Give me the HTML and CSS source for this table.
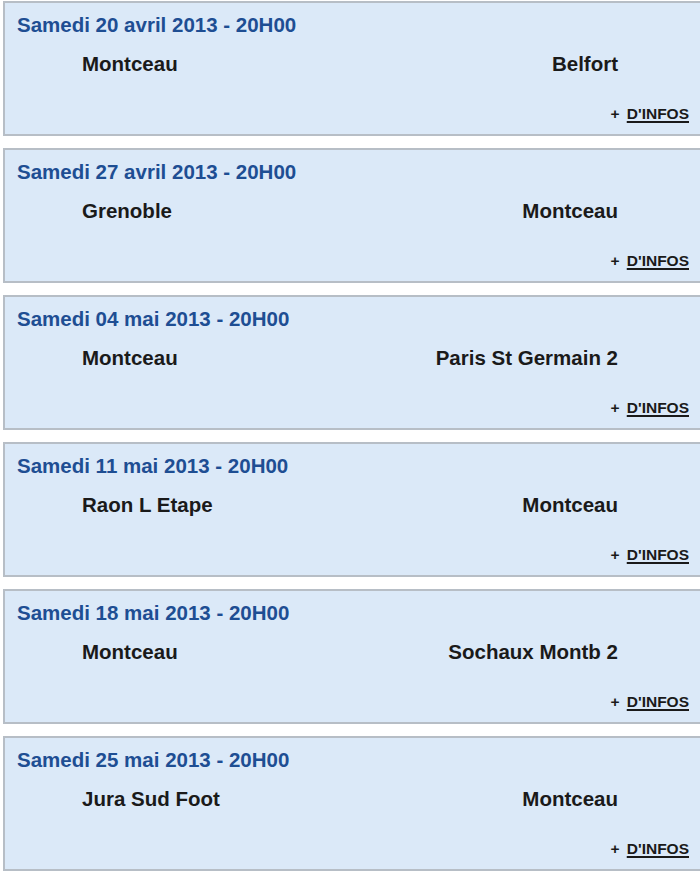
FILE: index.html
```html
<!DOCTYPE html>
<html lang="fr">
<head>
<meta charset="utf-8">
<title>Calendrier</title>
<link rel="stylesheet" href="styles.css">
</head>
<body>
<div class="list">
  <div class="card">
    <div class="date">Samedi 20 avril 2013 - 20H00</div>
    <div class="teams"><span class="home">Montceau</span><span class="away">Belfort</span></div>
    <div class="more">+ <a href="#">D'INFOS</a></div>
  </div>
  <div class="card">
    <div class="date">Samedi 27 avril 2013 - 20H00</div>
    <div class="teams"><span class="home">Grenoble</span><span class="away">Montceau</span></div>
    <div class="more">+ <a href="#">D'INFOS</a></div>
  </div>
  <div class="card">
    <div class="date">Samedi 04 mai 2013 - 20H00</div>
    <div class="teams"><span class="home">Montceau</span><span class="away">Paris St Germain 2</span></div>
    <div class="more">+ <a href="#">D'INFOS</a></div>
  </div>
  <div class="card">
    <div class="date">Samedi 11 mai 2013 - 20H00</div>
    <div class="teams"><span class="home">Raon L Etape</span><span class="away">Montceau</span></div>
    <div class="more">+ <a href="#">D'INFOS</a></div>
  </div>
  <div class="card">
    <div class="date">Samedi 18 mai 2013 - 20H00</div>
    <div class="teams"><span class="home">Montceau</span><span class="away">Sochaux Montb 2</span></div>
    <div class="more">+ <a href="#">D'INFOS</a></div>
  </div>
  <div class="card">
    <div class="date">Samedi 25 mai 2013 - 20H00</div>
    <div class="teams"><span class="home">Jura Sud Foot</span><span class="away">Montceau</span></div>
    <div class="more">+ <a href="#">D'INFOS</a></div>
  </div>
</div>
</body>
</html>
```

FILE: styles.css
```css
html, body {
  margin: 0;
  padding: 0;
  background: #ffffff;
  overflow: hidden;
}
body {
  font-family: "Liberation Sans", Arial, sans-serif;
}
.list {
  display: flex;
  flex-direction: column;
  gap: 12px;
  padding: 1px 0 0 3px;
}
.card {
  box-sizing: border-box;
  width: 720px;
  height: 135px;
  border: 2px solid #b7bec6;
  background: #dbe9f8;
  padding: 10px 0 0 12px;
  display: flex;
  flex-direction: column;
}
.date {
  font-size: 20.5px;
  font-weight: bold;
  line-height: 24px;
  color: #1e4e93;
}
.teams {
  width: 601px;
  box-sizing: border-box;
  margin-top: 15px;
  padding-left: 65px;
  display: flex;
  justify-content: space-between;
  font-size: 20.5px;
  font-weight: bold;
  line-height: 24px;
  color: #1a1a1a;
}
.more {
  width: 672px;
  margin-top: 26px;
  text-align: right;
  font-size: 15.5px;
  font-weight: bold;
  line-height: 24px;
  color: #1a1a1a;
}
.more a {
  margin-left: 3px;
  color: #1a1a1a;
  text-decoration: underline;
  text-decoration-thickness: 2px;
  text-underline-offset: 2px;
}
```
